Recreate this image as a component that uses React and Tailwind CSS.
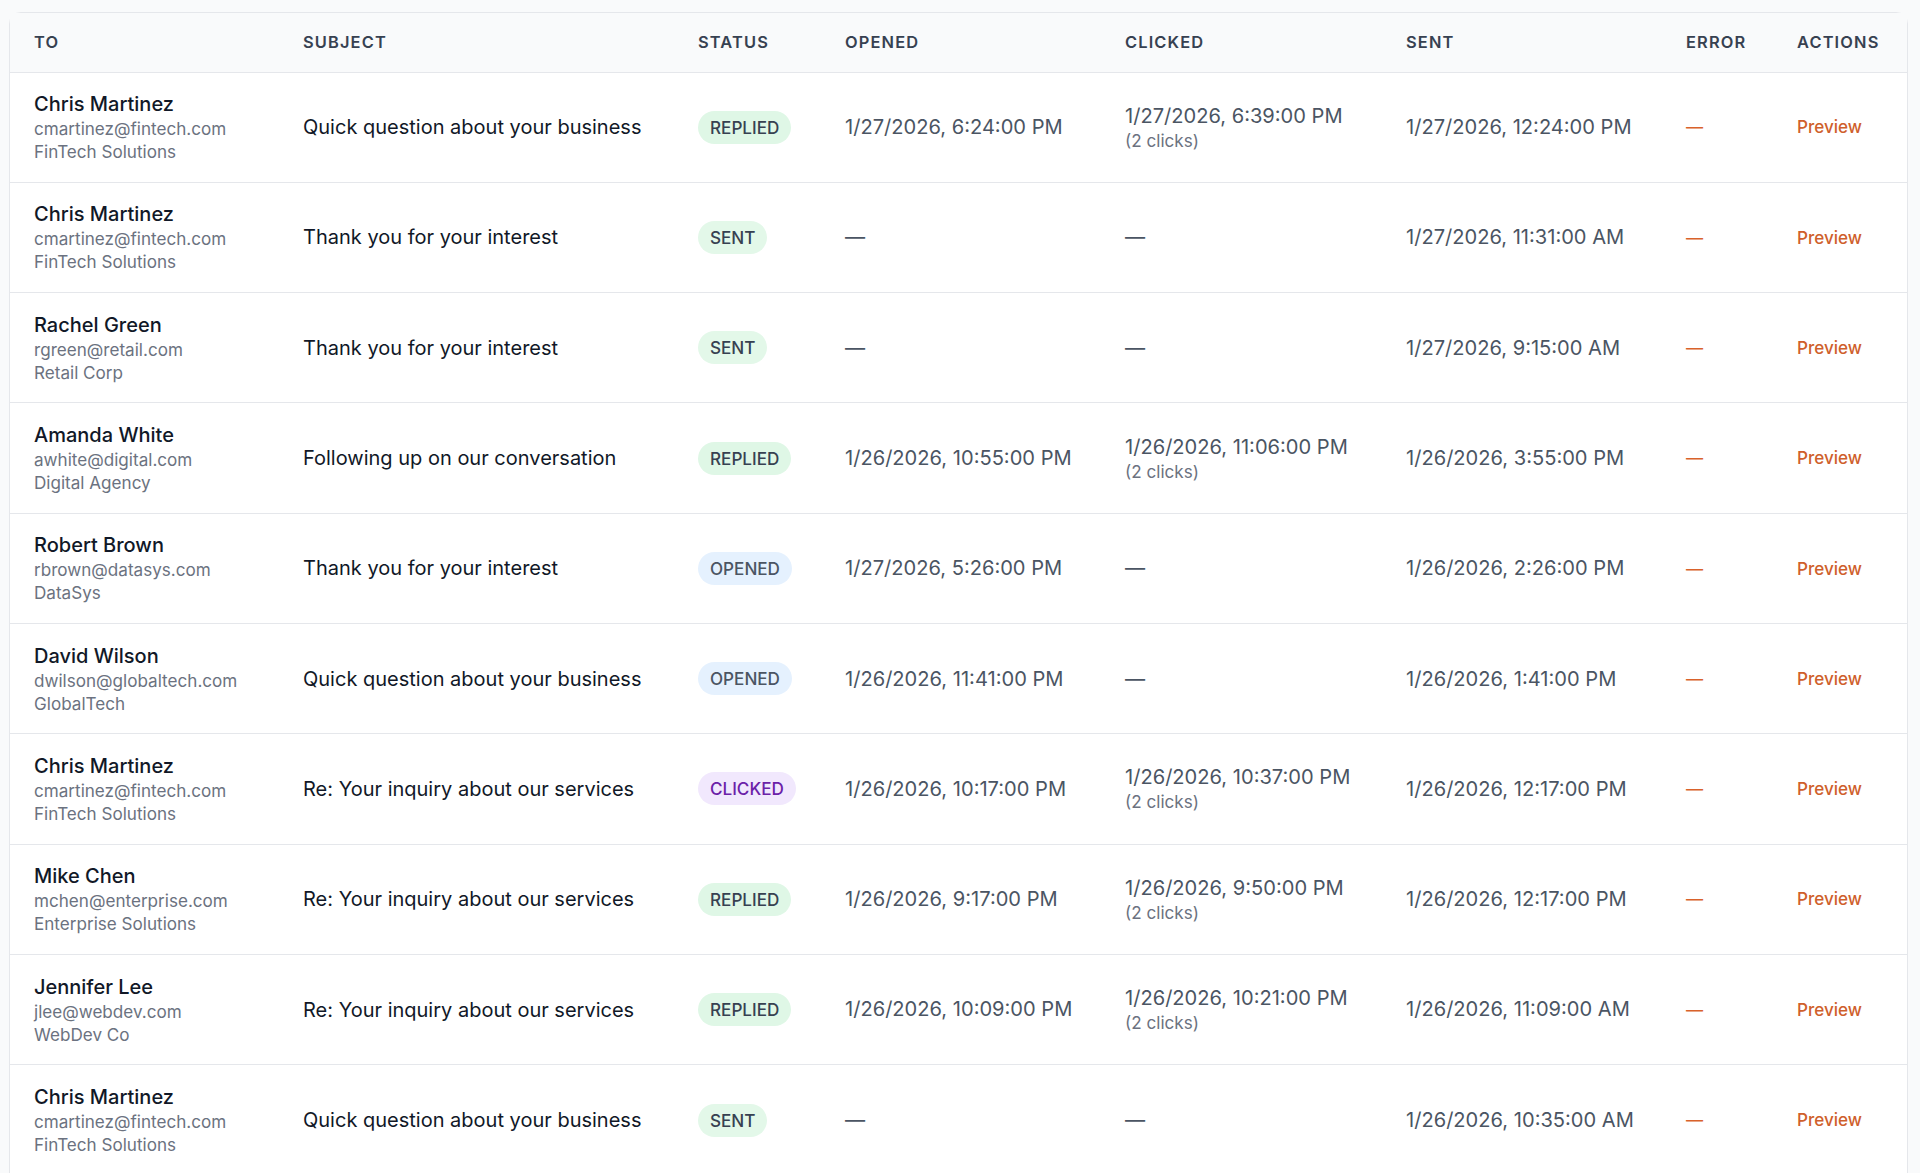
import React from "react";

const emails = [
  { name: "Chris Martinez", email: "cmartinez@fintech.com", company: "FinTech Solutions", subject: "Quick question about your business", status: "REPLIED", opened: "1/27/2026, 6:24:00 PM", clicked: "1/27/2026, 6:39:00 PM", clicks: 2, sent: "1/27/2026, 12:24:00 PM" },
  { name: "Chris Martinez", email: "cmartinez@fintech.com", company: "FinTech Solutions", subject: "Thank you for your interest", status: "SENT", sent: "1/27/2026, 11:31:00 AM" },
  { name: "Rachel Green", email: "rgreen@retail.com", company: "Retail Corp", subject: "Thank you for your interest", status: "SENT", sent: "1/27/2026, 9:15:00 AM" },
  { name: "Amanda White", email: "awhite@digital.com", company: "Digital Agency", subject: "Following up on our conversation", status: "REPLIED", opened: "1/26/2026, 10:55:00 PM", clicked: "1/26/2026, 11:06:00 PM", clicks: 2, sent: "1/26/2026, 3:55:00 PM" },
  { name: "Robert Brown", email: "rbrown@datasys.com", company: "DataSys", subject: "Thank you for your interest", status: "OPENED", opened: "1/27/2026, 5:26:00 PM", sent: "1/26/2026, 2:26:00 PM" },
  { name: "David Wilson", email: "dwilson@globaltech.com", company: "GlobalTech", subject: "Quick question about your business", status: "OPENED", opened: "1/26/2026, 11:41:00 PM", sent: "1/26/2026, 1:41:00 PM" },
  { name: "Chris Martinez", email: "cmartinez@fintech.com", company: "FinTech Solutions", subject: "Re: Your inquiry about our services", status: "CLICKED", opened: "1/26/2026, 10:17:00 PM", clicked: "1/26/2026, 10:37:00 PM", clicks: 2, sent: "1/26/2026, 12:17:00 PM" },
  { name: "Mike Chen", email: "mchen@enterprise.com", company: "Enterprise Solutions", subject: "Re: Your inquiry about our services", status: "REPLIED", opened: "1/26/2026, 9:17:00 PM", clicked: "1/26/2026, 9:50:00 PM", clicks: 2, sent: "1/26/2026, 12:17:00 PM" },
  { name: "Jennifer Lee", email: "jlee@webdev.com", company: "WebDev Co", subject: "Re: Your inquiry about our services", status: "REPLIED", opened: "1/26/2026, 10:09:00 PM", clicked: "1/26/2026, 10:21:00 PM", clicks: 2, sent: "1/26/2026, 11:09:00 AM" },
  { name: "Chris Martinez", email: "cmartinez@fintech.com", company: "FinTech Solutions", subject: "Quick question about your business", status: "SENT", sent: "1/26/2026, 10:35:00 AM" },
];

const badgeColors = {
  REPLIED: "bg-[#dff7e6] text-[#374151]",
  SENT: "bg-[#e3f8e9] text-[#374151]",
  OPENED: "bg-[#e5f1fe] text-[#4b5563]",
  CLICKED: "bg-[#f1e8fd] text-[#6b21a8]",
};

function Header({ children }) {
  return (
    <th className="h-[59px] px-6 text-left text-[16.4px] font-semibold tracking-[0.07em] text-[#374151]">
      {children}
    </th>
  );
}

function Dash() {
  return <span className="text-[#4b5563]">—</span>;
}

function EmailRow({ row }) {
  return (
    <tr className="h-[110.3px] border-t border-[#e5e7eb]">
      <td className="px-6 align-middle">
        <div className="text-[20px] leading-[26px] font-medium text-[#111827]">{row.name}</div>
        <div className="text-[17.1px] leading-[23px] text-[#6b7280]">{row.email}</div>
        <div className="text-[17.1px] leading-[23px] text-[#6b7280]">{row.company}</div>
      </td>
      <td className="px-6 text-[20px] text-[#111827]">{row.subject}</td>
      <td className="px-6">
        <span className={`inline-block h-[33px] rounded-full px-3 text-[17.1px] leading-[33px] font-medium ${badgeColors[row.status]}`}>
          {row.status}
        </span>
      </td>
      <td className="px-6 text-[20.1px] text-[#4b5563]">{row.opened || <Dash />}</td>
      <td className="px-6 text-[20.1px] text-[#4b5563]">
        {row.clicked ? (
          <>
            <div className="leading-[26px]">{row.clicked}</div>
            <div className="text-[17.1px] leading-[23px] text-[#6b7280]">({row.clicks} clicks)</div>
          </>
        ) : (
          <Dash />
        )}
      </td>
      <td className="px-6 text-[20.1px] text-[#4b5563]">{row.sent}</td>
      <td className="px-6 text-[17.1px] text-[#d9622b]">—</td>
      <td className="px-6 text-[17.1px] font-medium text-[#cf5f2c]">Preview</td>
    </tr>
  );
}

export default function App() {
  return (
    <div className="h-screen overflow-hidden bg-[#f9fafb] pt-3 pl-[9px] pr-3 font-['Inter',sans-serif]">
      <div className="rounded-t-xl border border-[#e5e7eb] bg-white">
        <table className="w-full table-fixed border-collapse">
          <colgroup>
            <col className="w-[269px]" />
            <col className="w-[395px]" />
            <col className="w-[147px]" />
            <col className="w-[280px]" />
            <col className="w-[281px]" />
            <col className="w-[280px]" />
            <col className="w-[111px]" />
            <col />
          </colgroup>
          <thead className="bg-[#f9fafb]">
            <tr>
              <Header>TO</Header>
              <Header>SUBJECT</Header>
              <Header>STATUS</Header>
              <Header>OPENED</Header>
              <Header>CLICKED</Header>
              <Header>SENT</Header>
              <Header>ERROR</Header>
              <Header>ACTIONS</Header>
            </tr>
          </thead>
          <tbody>
            {emails.map((row, i) => (
              <EmailRow key={i} row={row} />
            ))}
          </tbody>
        </table>
      </div>
    </div>
  );
}
